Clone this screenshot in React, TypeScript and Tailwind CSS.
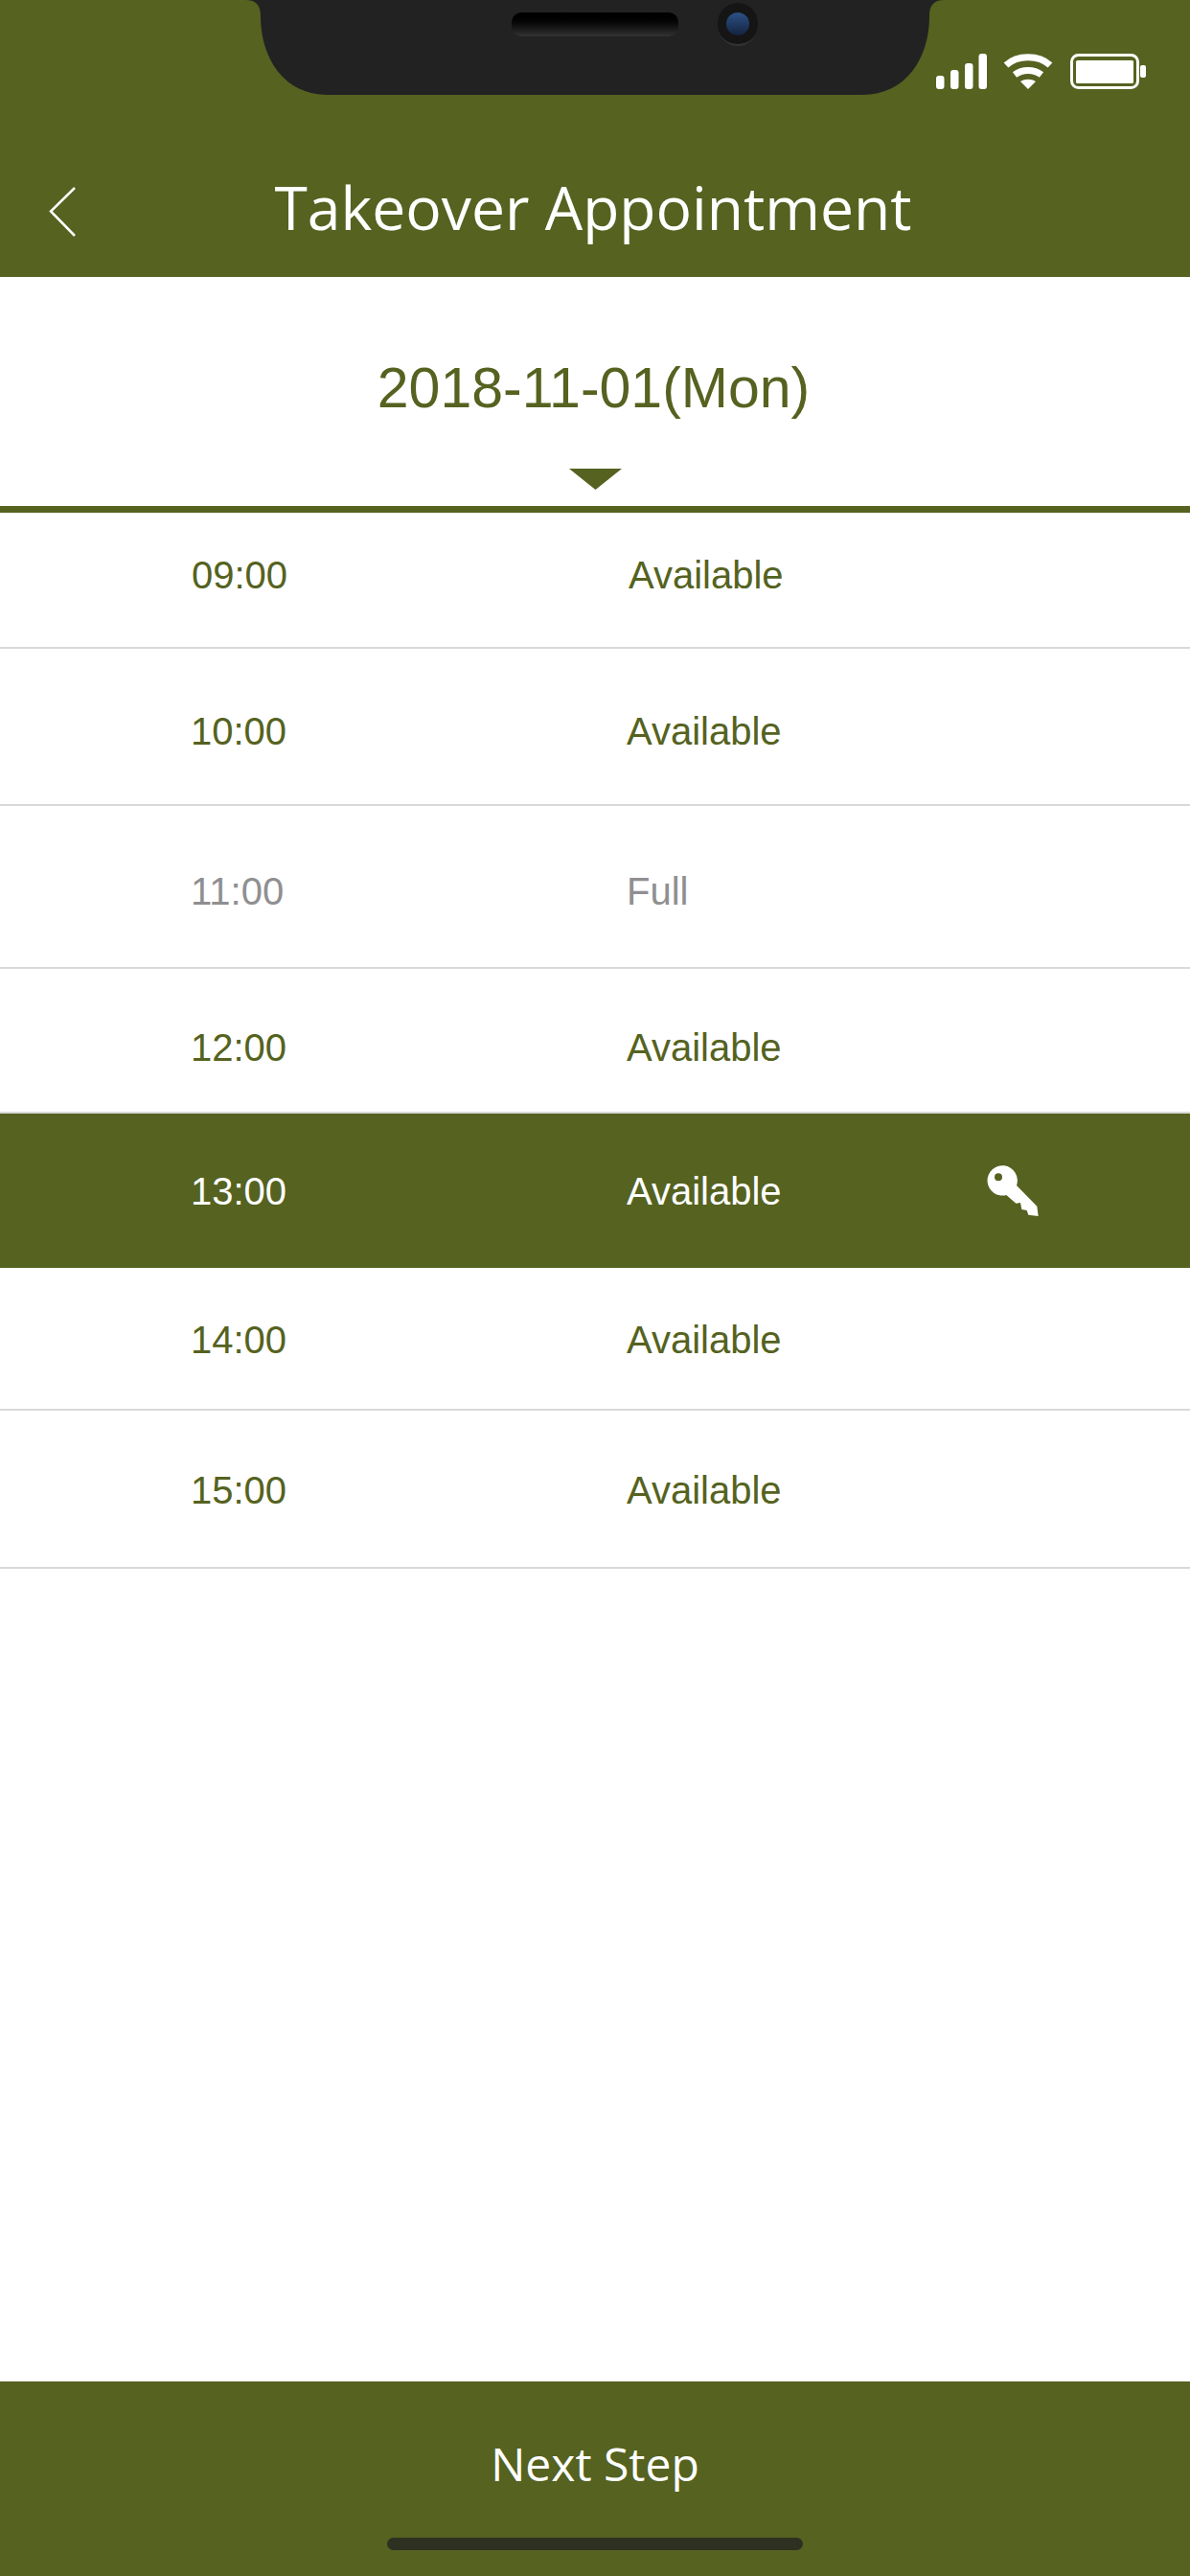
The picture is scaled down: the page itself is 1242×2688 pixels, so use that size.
const rows = [
  { time: "09:00", status: "Available", cls: "h-[142px] pl-[200px] pb-[10px]", gap: "w-[456px]" },
  { time: "10:00", status: "Available", cls: "h-[164px] pl-[199px] pt-[10px]", gap: "w-[455px]" },
  { time: "11:00", status: "Full", cls: "h-[170px] pl-[199px] pt-[10px]", gap: "w-[455px]", muted: true },
  { time: "12:00", status: "Available", cls: "h-[151px] pl-[199px] pt-[14px]", gap: "w-[455px]" },
  { time: "13:00", status: "Available", cls: "h-[161px] pl-[199px]", gap: "w-[455px]", active: true },
  { time: "14:00", status: "Available", cls: "h-[149px] pl-[199px] pt-[2px]", gap: "w-[455px]" },
  { time: "15:00", status: "Available", cls: "h-[165px] pl-[199px] pt-[2px]", gap: "w-[455px]" },
];

function KeyIcon() {
  return (
    <svg width="54" height="54" viewBox="205 107 162 162" className="ml-[216px]">
      <path
        fill="#fff"
        fillRule="evenodd"
        d="M298 170 362 235 366 266 335 262 330 248 314 245 310 224 296 226 266 200A47 47 0 1 1 298 170ZM241 132a12 12 0 1 0 0 24 12 12 0 0 0 0-24Z"
      />
    </svg>
  );
}

function StatusIcons() {
  return (
    <div className="absolute left-[977px] top-[56px] flex items-start">
      <svg width="53" height="37" viewBox="0 0 53 37" fill="#fff">
        <rect x="0" y="23" width="8.500" height="14" rx="3" />
        <rect x="15" y="17" width="8.500" height="20" rx="3" />
        <rect x="30" y="10" width="8.500" height="27" rx="3" />
        <rect x="44.500" y="0" width="8.500" height="37" rx="3" />
      </svg>
      <svg width="52" height="37" viewBox="0 0 52 37" className="ml-[17px]">
        <g fill="none" stroke="#fff" strokeWidth="7">
          <path d="M3 12C15 1 37 1 49 12" />
          <path d="M12 22C20 16 32 16 40 22" />
        </g>
        <path fill="#fff" d="M18 29c5-3 11-3 16 0l-8 8Z" />
      </svg>
      <svg width="79" height="37" viewBox="0 0 79 37" className="ml-[18px]">
        <rect x="1.500" y="1.500" width="69" height="34" rx="7" fill="none" stroke="#fff" strokeWidth="3" />
        <rect x="6" y="7" width="60" height="24" rx="1.500" fill="#fff" />
        <rect x="73" y="12" width="6" height="13" rx="2" fill="#fff" />
      </svg>
    </div>
  );
}

export default function App() {
  return (
    <div className="relative flex h-[2688px] w-[1242px] flex-col overflow-hidden bg-white font-['Liberation_Sans',Arial,sans-serif]">
      {/* Top bar */}
      <div className="relative h-[289px] shrink-0 bg-[#556220]">
        {/* notch */}
        <div className="absolute left-[256px] top-0 h-[99px] w-[730px]">
          <svg width="730" height="99" viewBox="0 0 730 99" className="block">
            <path
              fill="#222222"
              d="M0 0C12 0 16 6 16 17C16 60 40 99 86 99L644 99C690 99 714 60 714 17C714 6 718 0 730 0Z"
            />
          </svg>
          <div className="absolute left-[278px] top-[13px] h-[25px] w-[174px] rounded-[10px] bg-gradient-to-b from-black to-[#333333]" />
          <div className="absolute left-[493px] top-[3px] flex h-[45px] w-[42px] items-center justify-center rounded-full border-b-2 border-[#333333] bg-[#151515]">
            <div className="h-[24px] w-[24px] rounded-full bg-gradient-to-b from-[#2c5288] to-[#14233f]" />
          </div>
        </div>
        <StatusIcons />
        <svg width="30" height="54" viewBox="0 0 30 54" className="absolute left-[50px] top-[194px]">
          <path d="M28 2 3 26.500 28 52" fill="none" stroke="#fff" strokeWidth="2.500" />
        </svg>
        <h1 className="absolute inset-x-0 top-[172px] pr-[4px] text-center font-['Open_Sans',sans-serif] text-[62.400px] leading-[88px] font-normal text-white">
          Takeover Appointment
        </h1>
      </div>

      {/* Date picker */}
      <div className="flex h-[246px] shrink-0 flex-col items-center border-b-[7px] border-[#556220]">
        <div className="mt-[81px] pr-[3px] text-[59px] leading-[70px] text-[#556220]">2018-11-01(Mon)</div>
        <svg width="55" height="22" viewBox="0 0 55 22" className="mt-[49px]">
          <path d="M0 0h55L27.500 22Z" fill="#556220" />
        </svg>
      </div>

      {/* Time slots */}
      <div className="flex flex-col">
        {rows.map((r) => (
          <div
            key={r.time}
            className={`flex shrink-0 items-center text-[40px] ${r.cls} ${r.active ? "bg-[#556220] text-white" : r.muted ? "border-b-2 border-[#d9d9d9] text-[#8f8f91]" : "border-b-2 border-[#d9d9d9] text-[#556220]"}`}
          >
            <span className={`${r.gap} shrink-0`}>{r.time}</span>
            <span className="w-[160px]">{r.status}</span>
            {r.active && <KeyIcon />}
          </div>
        ))}
      </div>

      {/* Footer */}
      <div className="relative mt-auto flex h-[203px] shrink-0 justify-center bg-[#556220] pt-[52px]">
        <span className="font-['Open_Sans',sans-serif] text-[48px] leading-[68px] text-white">Next Step</span>
        <div className="absolute bottom-[27px] left-[404px] h-[13px] w-[434px] rounded-full bg-[#2e3022]" />
      </div>
    </div>
  );
}
